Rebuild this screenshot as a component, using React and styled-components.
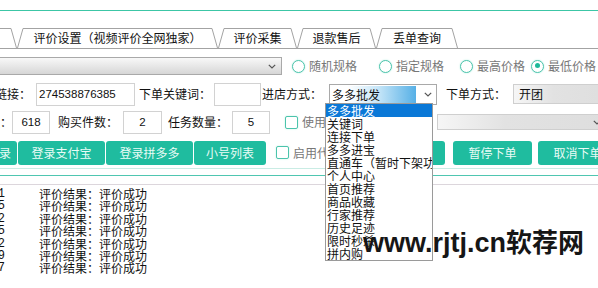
import React from "react";
import styled, { createGlobalStyle } from "styled-components";

const GlobalStyle = createGlobalStyle`
  html, body {
    margin: 0;
    padding: 0;
    background: #fff;
    overflow: hidden;
  }
  body {
    font-family: "Noto Sans CJK SC", "Liberation Sans", sans-serif;
    font-size: 12px;
    color: #111;
  }
`;

const tabs = [
  { label: "评价管理", w: 100 },
  { label: "评价设置（视频评价全网独家）", w: 201 },
  { label: "评价采集", w: 79 },
  { label: "退款售后", w: 79 },
  { label: "丢单查询", w: 82 },
];

const radios = [
  { label: "随机规格", gap: 10 },
  { label: "指定规格", gap: 22 },
  { label: "最高价格", gap: 16 },
  { label: "最低价格", gap: 6, checked: true },
];

const shopWays = [
  "多多批发",
  "关键词",
  "连接下单",
  "多多进宝",
  "直通车（暂时下架功能）",
  "个人中心",
  "首页推荐",
  "商品收藏",
  "行家推荐",
  "历史足迹",
  "限时秒杀",
  "拼内购",
];

const logs = ["10:21:31", "10:21:45", "10:22:02", "10:22:15", "10:22:32", "10:22:49", "10:23:07"];

function Chevron() {
  return (
    <svg width="8" height="5" viewBox="0 0 8 5">
      <polyline points="0.8,0.8 4,4 7.2,0.8" fill="none" stroke="#555" strokeWidth="1.2" />
    </svg>
  );
}

function Tab({ label, w }) {
  return (
    <TabItem $w={w}>
      <TabShape width={w} height="20" viewBox={`0 0 ${w} 20`}>
        <path
          d={`M0.5 20 L6 0.5 L${w - 6} 0.5 L${w - 0.5} 20`}
          fill="#fff"
          stroke="#a3a3a3"
        />
      </TabShape>
      <TabText>{label}</TabText>
    </TabItem>
  );
}

export default function App() {
  return (
    <Page>
      <GlobalStyle />
      <TopBar />
      <TabStrip>
        {tabs.map((t) => (
          <Tab key={t.label} {...t} />
        ))}
      </TabStrip>

      <Row $mt={7} $h={20}>
        <Select $w={290} $ml={-8} $h={18}>
          <span />
          <Chevron />
        </Select>
        {radios.map((r) => (
          <RadioItem key={r.label} $ml={r.gap}>
            <RadioDot $checked={r.checked} />
            <MutedText>{r.label}</MutedText>
          </RadioItem>
        ))}
      </Row>

      <Row $mt={6} $h={24}>
        <Label $ml={-5}>链接：</Label>
        <Input $w={99} $ml={5} $align="left">274538876385</Input>
        <Label $ml={4}>下单关键词：</Label>
        <Input $w={47} $ml={3} />
        <Label $ml={1}>进店方式：</Label>
        <ShopSelect $ml={7}>
          <Picked>多多批发</Picked>
          <Chevron />
        </ShopSelect>
        <Label $ml={9}>下单方式：</Label>
        <Select $w={100} $ml={7} $h={20} $flat>
          <span>开团</span>
          <Chevron />
        </Select>
      </Row>

      <Row $mt={4} $h={24}>
        <Label $ml={-12}>数：</Label>
        <Input $w={38} $ml={0}>618</Input>
        <Label $ml={8}>购买件数：</Label>
        <Input $w={39} $ml={5}>2</Input>
        <Label $ml={6}>任务数量：</Label>
        <Input $w={38} $ml={4}>5</Input>
        <Check $ml={15} />
        <MutedText $max={24}>使用代理</MutedText>
        <Select $w={170} $ml={111} $h={16} $flat>
          <span />
          <Chevron />
        </Select>
      </Row>

      <ButtonRow>
        <ActionButton $w={87} $ml={-70} $end>登录</ActionButton>
        <ActionButton $w={87} $ml={1}>登录支付宝</ActionButton>
        <ActionButton $w={87} $ml={1}>登录拼多多</ActionButton>
        <ActionButton $w={72} $ml={1}>小号列表</ActionButton>
        <Check $ml={10} />
        <MutedText $max={32}>启用代付</MutedText>
        <ActionButton $w={79} $ml={41} />
        <ActionButton $w={79} $ml={8}>暂停下单</ActionButton>
        <ActionButton $w={79} $ml={6}>取消下单</ActionButton>
      </ButtonRow>
      <TealRule />
      <GrayRule />

      <Log>
        {logs.map((t, i) => (
          <LogRow key={i}>
            <TimeCell>
              <span>{t}</span>
            </TimeCell>
            <LogText>评价结果：评价成功</LogText>
          </LogRow>
        ))}
      </Log>

      <DropList>
        {shopWays.map((s, i) => (
          <DropItem key={s} $active={i === 0}>
            {s}
          </DropItem>
        ))}
      </DropList>

      <Watermark>
        www.rjtj.cn<Cjk>软荐网</Cjk>
      </Watermark>
    </Page>
  );
}

const Page = styled.div`
  position: relative;
  width: 598px;
  height: 288px;
  overflow: hidden;
  background: #fff;
`;

const TopBar = styled.div`
  height: 10px;
  border-bottom: 1px solid #3cc6a6;
`;

const TabStrip = styled.div`
  display: flex;
  align-items: flex-end;
  height: 20px;
  margin-top: 17px;
  margin-left: -83px;
  border-bottom: 1px solid #a3a3a3;
`;

const TabItem = styled.div`
  position: relative;
  flex: 0 0 ${(p) => p.$w}px;
  height: 20px;
  display: flex;
  align-items: center;
  justify-content: center;
`;

const TabShape = styled.svg`
  position: absolute;
  left: 0;
  top: 0;
`;

const TabText = styled.span`
  position: relative;
  font-size: 12px;
  line-height: 14px;
  color: #111;
  white-space: nowrap;
`;

const Row = styled.div`
  display: flex;
  align-items: center;
  height: ${(p) => p.$h}px;
  margin-top: ${(p) => p.$mt}px;
  white-space: nowrap;
`;

const Select = styled.div`
  flex: 0 0 ${(p) => p.$w}px;
  height: ${(p) => p.$h}px;
  margin-left: ${(p) => p.$ml}px;
  box-sizing: border-box;
  border: 1px solid ${(p) => (p.$flat ? "#cfcfcf" : "#a9a9a9")};
  background: ${(p) =>
    p.$flat
      ? "linear-gradient(to right, #f6f6f6, #e2e2e2 40%, #dedede)"
      : "linear-gradient(#f8f8f8, #e4e4e4 60%, #d6d6d6)"};
  display: flex;
  align-items: center;
  justify-content: space-between;
  padding: 0 5px 0 5px;
  font-size: 12px;
  line-height: 14px;
  color: #111;
`;

const RadioItem = styled.label`
  flex: 0 0 auto;
  display: flex;
  align-items: center;
  gap: 4px;
  margin-left: ${(p) => p.$ml}px;
`;

const RadioDot = styled.span`
  position: relative;
  flex: 0 0 13px;
  width: 13px;
  height: 13px;
  box-sizing: border-box;
  border-radius: 50%;
  border: 1.5px solid #4cc4ac;
  box-shadow: 0 0 2px #b6ece0;
  background: #fff;

  &::after {
    content: "";
    display: ${(p) => (p.$checked ? "block" : "none")};
    position: absolute;
    left: 2.5px;
    top: 2.5px;
    width: 5px;
    height: 5px;
    border-radius: 50%;
    background: #1db99a;
  }
`;

const MutedText = styled.span`
  flex: 0 0 auto;
  font-size: 12px;
  line-height: 16px;
  color: #777;
  white-space: nowrap;
  ${(p) => (p.$max ? `overflow: hidden; width: ${p.$max}px;` : "")}
`;

const Label = styled.span`
  flex: 0 0 auto;
  margin-left: ${(p) => p.$ml}px;
  font-size: 12px;
  line-height: 14px;
  color: #111;
  white-space: nowrap;
`;

const Input = styled.div`
  flex: 0 0 ${(p) => p.$w}px;
  height: 23px;
  margin-left: ${(p) => p.$ml}px;
  box-sizing: border-box;
  border: 1px solid #d2d2d2;
  background: #fff;
  display: flex;
  align-items: center;
  justify-content: ${(p) => (p.$align === "left" ? "flex-start" : "center")};
  padding: 0 2px;
  font-family: "Liberation Sans", sans-serif;
  font-size: 11.5px;
  color: #111;
`;

const ShopSelect = styled.div`
  flex: 0 0 108px;
  height: 21px;
  margin-left: ${(p) => p.$ml}px;
  box-sizing: border-box;
  border: 1px solid #a9a9a9;
  background: #fff;
  display: flex;
  align-items: center;
  justify-content: space-between;
  padding: 0 4px 0 1px;
`;

const Picked = styled.span`
  flex: 0 0 84px;
  font-size: 12px;
  line-height: 17px;
  padding-left: 1px;
  color: #111;
  background: linear-gradient(to right, #ffffff 20%, #c7e6f8 55%, #56b0e6);
`;

const Check = styled.span`
  flex: 0 0 13px;
  height: 13px;
  margin-left: ${(p) => p.$ml}px;
  margin-right: 4px;
  box-sizing: border-box;
  border: 1px solid #4cc4ac;
  border-radius: 2px;
  box-shadow: 0 0 2px #c2efe5;
  background: #fff;
`;

const ButtonRow = styled.div`
  display: flex;
  align-items: center;
  height: 25px;
  margin-top: 6px;
  padding-bottom: 3px;
  border-bottom: 1px solid #c9ece4;
  white-space: nowrap;
`;

const ActionButton = styled.div`
  flex: 0 0 ${(p) => p.$w}px;
  height: 24px;
  margin-left: ${(p) => p.$ml}px;
  box-sizing: border-box;
  border-radius: 3px;
  background: #1fbc9f;
  color: #e9fbf6;
  font-size: 12px;
  line-height: 24px;
  display: flex;
  align-items: center;
  justify-content: ${(p) => (p.$end ? "flex-end" : "center")};
  padding-right: ${(p) => (p.$end ? "6px" : "0")};
`;

const TealRule = styled.div`
  height: 6px;
  border-bottom: 1px solid #4fc6b1;
`;

const GrayRule = styled.div`
  height: 8px;
  border-bottom: 1px solid #dcd6dc;
`;

const Log = styled.div`
  padding-top: 3px;
  font-family: "Noto Sans CJK SC", sans-serif;
  font-size: 12px;
  line-height: 12.4px;
  color: #111;
`;

const LogRow = styled.div`
  display: flex;
  height: 12.4px;
`;

const TimeCell = styled.div`
  flex: 0 0 5px;
  display: flex;
  justify-content: flex-end;
  overflow: hidden;
  white-space: nowrap;
  font-family: "Liberation Mono", monospace;
  font-size: 12px;
`;

const LogText = styled.span`
  margin-left: 34px;
  white-space: nowrap;
`;

const DropList = styled.ul`
  position: absolute;
  left: 325px;
  top: 103px;
  width: 108px;
  margin: 0;
  padding: 0;
  list-style: none;
  box-sizing: border-box;
  border: 1px solid #9a9a9a;
  background: #fff;
  overflow: hidden;
`;

const DropItem = styled.li`
  height: 13px;
  padding-left: 1px;
  font-size: 12px;
  line-height: 13px;
  white-space: nowrap;
  overflow: hidden;
  color: ${(p) => (p.$active ? "#fff" : "#111")};
  background: ${(p) => (p.$active ? "#0a78d7" : "transparent")};
`;

const Watermark = styled.div`
  position: absolute;
  left: 363px;
  top: 224px;
  font-family: "Liberation Sans", sans-serif;
  font-weight: 700;
  font-size: 27px;
  line-height: 34px;
  color: #161616;
  white-space: nowrap;
`;

const Cjk = styled.span`
  font-family: "Noto Sans CJK SC", sans-serif;
  font-weight: 700;
  font-size: 26px;
`;
